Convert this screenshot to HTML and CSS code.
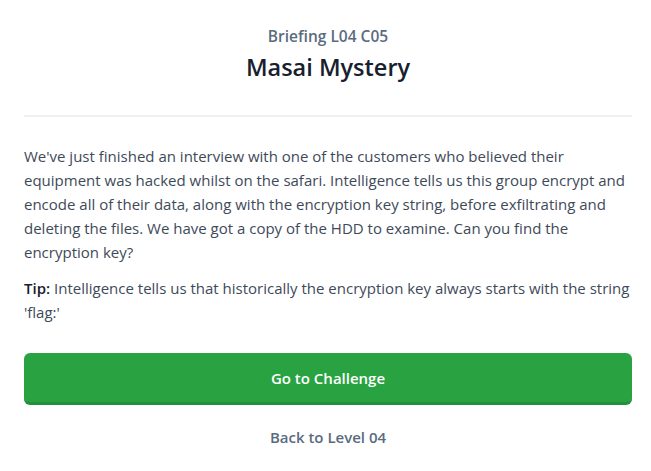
FILE: index.html
```html
<!DOCTYPE html>
<html>
<head>
<meta charset="utf-8">
<link rel="stylesheet" href="styles.css">
</head>
<body>
<main class="briefing">
  <header class="head">
    <div class="sub">Briefing L04 C05</div>
    <h1 class="title">Masai Mystery</h1>
  </header>
  <section class="body">
    <p>We've just finished an interview with one of the customers who believed their equipment was hacked whilst on the safari. Intelligence tells us this group encrypt and encode all of their data, along with the encryption key string, before exfiltrating and deleting the files. We have got a copy of the HDD to examine. Can you find the encryption key?</p>
    <p><strong>Tip:</strong> Intelligence tells us that historically the encryption key always starts with the string 'flag:'</p>
  </section>
  <a class="btn" href="#">Go to Challenge</a>
  <a class="back" href="#">Back to Level 04</a>
</main>
</body>
</html>
```

FILE: styles.css
```css
* { box-sizing: border-box; }
html, body { margin: 0; background: #fff; }
body { font-family: "Open Sans", "Liberation Sans", sans-serif; color: #3e4a59; }
.briefing { padding: 0 19px 0 24px; width: 651px; display: flex; flex-direction: column; }
.head { display: flex; flex-direction: column; align-items: center; padding-top: 27px; padding-bottom: 33px; border-bottom: 2px solid #eef0f4; }
.sub { font-size: 15.5px; line-height: 18px; color: #5b6b7f; font-weight: 600; }
.title { margin: 7px 0 0; font-size: 23.5px; line-height: 30px; font-weight: 600; color: #17202e; }
.body { padding-top: 27px; }
.body p { margin: 0 0 12px; font-size: 15px; line-height: 24px; }
.body strong { color: #17202e; font-weight: 600; }
.btn { margin-top: 17px; display: flex; align-items: center; justify-content: center; height: 52px; background: #29a341; border-bottom: 3px solid #23903a; border-radius: 6px; color: #fff; font-weight: 600; font-size: 15px; text-decoration: none; }
.back { margin-top: 22px; align-self: center; font-size: 15px; color: #5a6b80; font-weight: 600; text-decoration: none; }
```
